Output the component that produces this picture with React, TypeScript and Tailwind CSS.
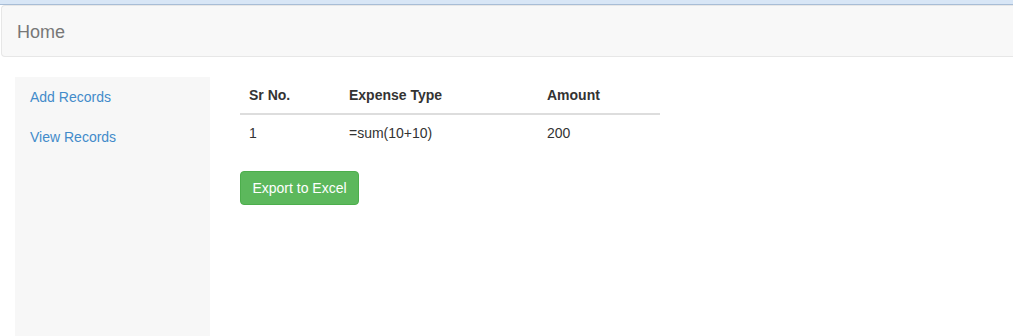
import React from "react";

const rows = [{ sr: "1", type: "=sum(10+10)", amount: "200" }];

const App = () => {
  return (
    <div className="min-h-[336px] bg-white font-['Liberation_Sans',Arial,sans-serif] text-[14px] leading-[20px] text-[#333]">
      <div className="h-[5px] bg-[#d8e6f6] border-b border-[#a8bdd6]" />
      <nav className="ml-[1px] h-[52px] bg-[#f8f8f8] border border-r-0 border-[#e7e7e7] rounded-l-[4px] flex items-center px-[15px] pt-[2px]">
        <span className="text-[18px] text-[#777]">Home</span>
      </nav>
      <div className="flex px-[15px] mt-[20px]">
        <aside className="w-[195px] min-h-[259px] bg-[#f7f7f7] flex flex-col">
          <a href="#" className="px-[15px] py-[10px] text-[#428bca]">Add Records</a>
          <a href="#" className="px-[15px] py-[10px] text-[#428bca]">View Records</a>
        </aside>
        <main className="pl-[30px]">
          <table className="w-[420px] border-collapse mb-[20px]">
            <thead>
              <tr className="border-b-2 border-[#ddd] text-left">
                <th className="py-[8px] pl-[9px] pr-[8px] w-[100px] font-bold">Sr No.</th>
                <th className="py-[8px] pl-[9px] pr-[8px] w-[198px] font-bold">Expense Type</th>
                <th className="py-[8px] pl-[9px] pr-[8px] font-bold">Amount</th>
              </tr>
            </thead>
            <tbody>
              {rows.map((r) => (
                <tr key={r.sr}>
                  <td className="py-[8px] pl-[9px] pr-[8px]">{r.sr}</td>
                  <td className="py-[8px] pl-[9px] pr-[8px]">{r.type}</td>
                  <td className="py-[8px] pl-[9px] pr-[8px]">{r.amount}</td>
                </tr>
              ))}
            </tbody>
          </table>
          <button className="h-[34px] w-[119px] bg-[#5cb85c] border border-[#4cae4c] rounded-[4px] text-white">
            Export to Excel
          </button>
        </main>
      </div>
    </div>
  );
};

export default App;
